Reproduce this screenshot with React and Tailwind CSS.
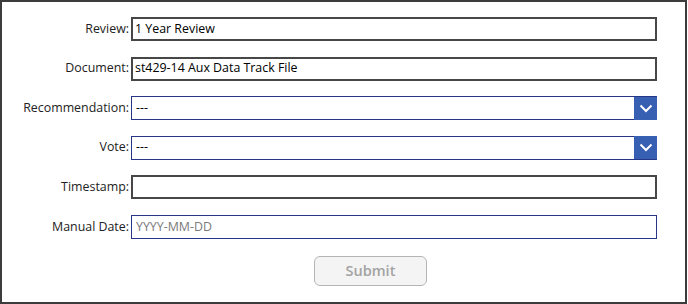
import React from 'react'

const fields = [
  { label: 'Review:', value: '1 Year Review', kind: 'text' },
  { label: 'Document:', value: 'st429-14 Aux Data Track File', kind: 'text' },
  { label: 'Recommendation:', value: '---', kind: 'select' },
  { label: 'Vote:', value: '---', kind: 'select' },
  { label: 'Timestamp:', value: '', kind: 'text' },
  { label: 'Manual Date:', value: '', placeholder: 'YYYY-MM-DD', kind: 'date' },
]

const Chevron = () => (
  <svg width="14" height="9" viewBox="0 0 14 9" fill="none">
    <path d="M1.5 1.5 L7 7 L12.5 1.5" stroke="white" strokeWidth="2" />
  </svg>
)

const Field = ({ field }) => {
  let box = 'border-2 border-[#474747]'
  if (field.kind !== 'text') box = 'border-[1.5px] border-[#28368a]'
  return (
    <div className="flex items-center h-6">
      <div className="w-[129px] pr-[2px] text-right text-[12.4px] text-[#222]">{field.label}</div>
      <div className={`w-[526px] h-6 flex items-center bg-white ${box}`}>
        <span
          className={`flex-1 pl-[2px] text-[12.4px] ${
            field.placeholder ? 'text-[#7a7a7a] pl-[4px]' : 'text-black'
          } ${field.kind === 'select' ? 'pl-[4px]' : ''}`}
        >
          {field.value || field.placeholder}
        </span>
        {field.kind === 'select' && (
          <div className="w-[23px] h-[23px] -mr-[1px] bg-[#3860b2] flex items-center justify-center">
            <Chevron />
          </div>
        )}
      </div>
    </div>
  )
}

export default function App() {
  return (
    <div
      className="w-[687px] h-[304px] border-2 border-[#3c3c3c] bg-white pt-[15px]"
      style={{ fontFamily: '"Open Sans", "Liberation Sans", sans-serif' }}
    >
      <div className="flex flex-col gap-[15.6px]">
        {fields.map((f) => (
          <Field key={f.label} field={f} />
        ))}
      </div>
      <div className="pl-[312px] pt-[17px]">
        <button className="w-[113px] h-[30px] rounded-[6px] border border-[#b5b5b5] bg-[#f4f4f4] text-[14.5px] font-semibold text-[#a3a3a3]">
          Submit
        </button>
      </div>
    </div>
  )
}
